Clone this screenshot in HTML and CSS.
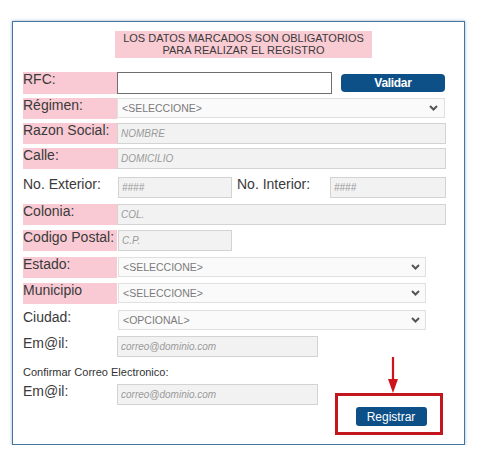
FILE: index.html
```html
<!DOCTYPE html>
<html lang="es">
<head>
<meta charset="utf-8">
<title>Registro</title>
<link rel="stylesheet" href="styles.css">
</head>
<body>
<div class="frame">
  <div class="notice">LOS DATOS MARCADOS SON OBLIGATORIOS<br>PARA REALIZAR EL REGISTRO</div>

  <div class="group group-a">
    <div class="row row-rfc">
      <label class="lbl req">RFC:</label>
      <input class="rfc" type="text">
      <button class="btn btn-validar" type="button">Validar</button>
    </div>
    <div class="row">
      <label class="lbl req">Régimen:</label>
      <div class="sel sel-wide"><span>&lt;SELECCIONE&gt;</span><svg class="chev" width="9" height="6" viewBox="0 0 9 6"><polyline points="1,1 4.5,4.5 8,1" fill="none" stroke="#555" stroke-width="2"/></svg></div>
    </div>
    <div class="row">
      <label class="lbl req">Razon Social:</label>
      <input class="inp inp-wide" type="text" placeholder="NOMBRE">
    </div>
    <div class="row">
      <label class="lbl req">Calle:</label>
      <input class="inp inp-wide" type="text" placeholder="DOMICILIO">
    </div>
  </div>

  <div class="group group-b">
    <div class="row">
      <label class="lbl">No. Exterior:</label>
      <input class="inp inp-short" type="text" placeholder="####">
      <label class="lbl lbl-int">No. Interior:</label>
      <input class="inp inp-int" type="text" placeholder="####">
    </div>
    <div class="row">
      <label class="lbl req">Colonia:</label>
      <input class="inp inp-wide" type="text" placeholder="COL.">
    </div>
    <div class="row">
      <label class="lbl req">Codigo Postal:</label>
      <input class="inp inp-short" type="text" placeholder="C.P.">
    </div>
    <div class="row">
      <label class="lbl req">Estado:</label>
      <div class="sel sel-mid"><span>&lt;SELECCIONE&gt;</span><svg class="chev" width="9" height="6" viewBox="0 0 9 6"><polyline points="1,1 4.5,4.5 8,1" fill="none" stroke="#555" stroke-width="2"/></svg></div>
    </div>
    <div class="row">
      <label class="lbl req">Municipio</label>
      <div class="sel sel-mid"><span>&lt;SELECCIONE&gt;</span><svg class="chev" width="9" height="6" viewBox="0 0 9 6"><polyline points="1,1 4.5,4.5 8,1" fill="none" stroke="#555" stroke-width="2"/></svg></div>
    </div>
    <div class="row">
      <label class="lbl">Ciudad:</label>
      <div class="sel sel-mid"><span>&lt;OPCIONAL&gt;</span><svg class="chev" width="9" height="6" viewBox="0 0 9 6"><polyline points="1,1 4.5,4.5 8,1" fill="none" stroke="#555" stroke-width="2"/></svg></div>
    </div>
    <div class="row">
      <label class="lbl">Em@il:</label>
      <input class="inp inp-mail" type="text" placeholder="correo@dominio.com">
    </div>
  </div>

  <div class="bottom">
    <div class="bottom-left">
      <div class="confirm">Confirmar Correo Electronico:</div>
      <div class="row">
        <label class="lbl">Em@il:</label>
        <input class="inp inp-mail" type="text" placeholder="correo@dominio.com">
      </div>
    </div>
    <div class="bottom-right">
      <svg class="arrow" width="12" height="36" viewBox="0 0 12 36"><line x1="6" y1="0" x2="6" y2="24" stroke="#d0121b" stroke-width="2.2"/><polygon points="1,22 11,22 6,36" fill="#d0121b"/></svg>
      <div class="highlight">
        <button class="btn btn-registrar" type="button">Registrar</button>
      </div>
    </div>
  </div>
</div>
</body>
</html>
```

FILE: styles.css
```css
* { box-sizing: border-box; }

body {
  margin: 0;
  background: #ffffff;
  font-family: "Liberation Sans", Arial, sans-serif;
  color: #333333;
}

.frame {
  margin: 21px 0 0 12px;
  width: 453px;
  height: 424px;
  border: 1px solid #4475a0;
  box-shadow: 0 0 3px rgba(80, 130, 180, 0.6);
  padding: 9px 0 0 10px;
  background: #ffffff;
}

.notice {
  margin-left: 92px;
  width: 257px;
  height: 27px;
  padding-top: 2px;
  background: #f9ccd4;
  font-size: 11px;
  line-height: 11.5px;
  text-align: center;
  color: #3a3a3a;
}

.group {
  display: flex;
  flex-direction: column;
}

.group-a {
  margin-top: 14px;
  gap: 4px;
}

.group-b {
  margin-top: 8px;
  gap: 5.5px;
}

.row {
  display: flex;
  height: 21px;
  align-items: stretch;
}

.row-rfc { height: 22px; }

.lbl {
  width: 94px;
  flex: none;
  font-size: 14px;
  line-height: 15px;
  color: #3a3a3a;
}

.lbl.req { background: #f9cad3; }

.lbl-int {
  width: 93px;
  margin-left: 5px;
}

.rfc {
  width: 215px;
  margin: 0;
  border: 1px solid #6f6f6f;
  background: #ffffff;
  padding: 0 3px;
}

.btn {
  border: none;
  background: #0d5088;
  color: #ffffff;
  font-family: "Liberation Sans", Arial, sans-serif;
  font-weight: bold;
  border-radius: 4px;
  padding: 0;
  margin: 0;
}

.btn-validar {
  width: 104px;
  height: 18px;
  margin: 2px 0 0 9px;
  font-size: 12px;
  letter-spacing: -0.3px;
}

.inp {
  margin: 0;
  height: 21px;
  border: 1px solid #d3d3d3;
  background: #f2f2f2;
  padding: 0 3px;
  font-family: "Liberation Sans", Arial, sans-serif;
  font-size: 10px;
  font-style: italic;
}

.inp::placeholder { color: #9a9a9a; }

.inp-wide { width: 329px; }
.inp-short { width: 114px; margin-left: 1px; }
.inp-int { width: 116px; }
.inp-mail { width: 201px; }

.sel {
  display: flex;
  align-items: center;
  justify-content: space-between;
  height: 20px;
  border: 1px solid #e0e0e0;
  background: #fafafa;
  padding: 0 5px 0 4px;
  font-size: 10.5px;
  color: #7a7a7a;
}

.sel-wide { width: 328px; padding-right: 6px; }
.sel-mid { width: 308px; margin-left: 1px; }

.chev { display: block; flex: none; }

.bottom {
  display: flex;
}

.bottom-left {
  width: 312px;
  padding-top: 9px;
}

.confirm {
  font-size: 11px;
  line-height: 13px;
  height: 13px;
  margin-bottom: 5px;
  color: #333333;
}

.bottom-right {
  display: flex;
  flex-direction: column;
  width: 108px;
}

.arrow {
  display: block;
  margin-left: 52px;
}

.highlight {
  width: 108px;
  height: 42px;
  border: 3px solid #c3161e;
  display: flex;
  justify-content: center;
  padding: 11px 0 0 4px;
}

.btn-registrar {
  width: 71px;
  height: 19px;
  font-size: 12px;
  font-weight: normal;
  border-radius: 3px;
}
```
